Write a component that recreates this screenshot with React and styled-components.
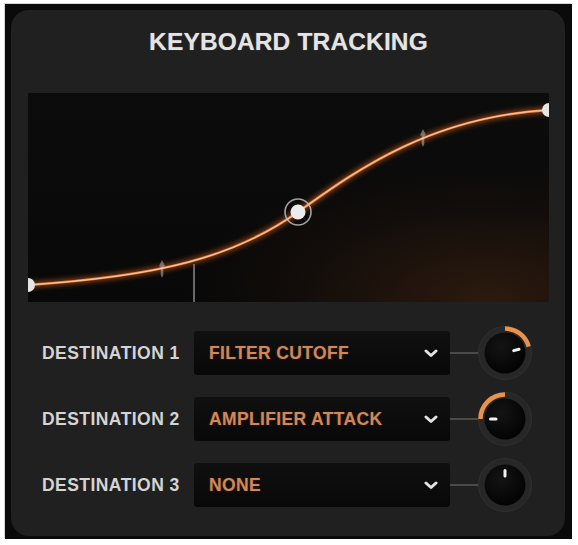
import React from 'react';
import styled, { createGlobalStyle } from 'styled-components';

const Global = createGlobalStyle`
  html, body { margin: 0; padding: 0; background: #ffffff; }
  body { font-family: "Liberation Sans", Arial, Helvetica, sans-serif; }
`;

const Frame = styled.div`
  margin: 4px 0 0 5px;
  width: 567px;
  height: 535px;
  box-sizing: border-box;
  background: #0a0a0a;
  padding: 6px 7px 3px 6px;
  box-shadow: -1px -1px 0 #d4d4d4;
`;

const Panel = styled.div`
  height: 100%;
  box-sizing: border-box;
  background: #202020;
  border-radius: 18px;
  padding: 18px 16px 0 17px;
  display: flex;
  flex-direction: column;
`;

const Title = styled.h1`
  margin: 0;
  text-align: center;
  font-size: 24.5px;
  line-height: 28px;
  font-weight: 700;
  letter-spacing: 0.15px;
  color: #e4e4e4;
  text-shadow: 0 0 1px rgba(255, 255, 255, 0.35);
`;

const Graph = styled.div`
  margin-top: 37px;
  width: 521px;
  height: 209px;
  background:
    radial-gradient(ellipse 75% 85% at 88% 98%, rgba(72, 40, 20, 0.55), rgba(40, 22, 12, 0.22) 55%, transparent 78%),
    linear-gradient(180deg, #0c0c0c 0%, #080808 100%);
  overflow: hidden;
  svg { display: block; }
`;

const Rows = styled.div`
  margin-top: 24px;
  display: flex;
  flex-direction: column;
  gap: 12px;
`;

const Row = styled.div`
  display: flex;
  align-items: center;
  height: 54px;
  padding-left: 14px;
`;

const Label = styled.div`
  width: 152px;
  font-size: 17.5px;
  font-weight: 700;
  letter-spacing: 0.45px;
  color: #d4d4d4;
  white-space: nowrap;
`;

const Select = styled.div`
  width: 256px;
  height: 44px;
  box-sizing: border-box;
  display: flex;
  align-items: center;
  justify-content: space-between;
  padding: 0 12px 0 15px;
  background: linear-gradient(180deg, #101010 0%, #080808 100%);
  border-radius: 3px;
`;

const Value = styled.span`
  font-size: 17.5px;
  font-weight: 700;
  letter-spacing: 0.35px;
  color: #d08759;
  text-shadow: 0 0 2px rgba(220, 120, 60, 0.3);
  white-space: nowrap;
`;

const Connector = styled.div`
  width: 28px;
  height: 2px;
  background: #4a4a4a;
`;

const KnobBox = styled.div`
  width: 54px;
  height: 54px;
  svg { display: block; }
`;

const pt = (cx, cy, r, a) => {
  const rad = (a * Math.PI) / 180;
  return [cx + r * Math.sin(rad), cy - r * Math.cos(rad)];
};

const Knob = ({ from, to, angle }) => {
  const c = 27;
  let arc = null;
  if (from !== to) {
    const [x0, y0] = pt(c, c, 24.5, from);
    const [x1, y1] = pt(c, c, 24.5, to);
    const large = Math.abs(to - from) > 180 ? 1 : 0;
    arc = `M${x0} ${y0} A24.5 24.5 0 ${large} 1 ${x1} ${y1}`;
  }
  const [ix0, iy0] = pt(c, c, 9, angle);
  const [ix1, iy1] = pt(c, c, 14.5, angle);
  return (
    <KnobBox>
      <svg width="54" height="54" viewBox="0 0 54 54">
        <defs>
          <radialGradient id="kb" cx="40%" cy="35%" r="70%">
            <stop offset="0%" stopColor="#141414" />
            <stop offset="100%" stopColor="#020202" />
          </radialGradient>
        </defs>
        <circle cx={c} cy={c} r="26.5" fill="#272727" stroke="#303030" strokeWidth="1" />
        {arc && <path d={arc} fill="none" stroke="#e8924f" strokeWidth="4.5" strokeLinecap="butt" />}
        <circle cx={c} cy={c} r="20.5" fill="url(#kb)" />
        <line x1={ix0} y1={iy0} x2={ix1} y2={iy1} stroke="#f2f2f2" strokeWidth="3" strokeLinecap="round" />
      </svg>
    </KnobBox>
  );
};

const Chevron = () => (
  <svg width="14" height="9" viewBox="0 0 14 9">
    <polyline points="2,2 7,6.5 12,2" fill="none" stroke="#e2e2e2" strokeWidth="3" strokeLinecap="round" strokeLinejoin="round" />
  </svg>
);

const Marker = ({ x, y }) => (
  <g transform={`translate(${x} ${y})`} opacity="0.45">
    <polygon points="0,-9 3,-3 1.3,-2 1.3,6 0,9 -1.3,6 -1.3,-2 -3,-3" fill="#d8d8d8" />
  </g>
);

const curve = 'M0 192 C130 183 205 165 270 119 C325 80 400 24 521 17';

const Curve = () => (
  <svg width="521" height="209" viewBox="0 0 521 209">
    <defs>
      <filter id="glow" x="-10%" y="-10%" width="120%" height="120%">
        <feGaussianBlur stdDeviation="2.5" />
      </filter>
    </defs>
    <line x1="166" y1="171" x2="166" y2="209" stroke="#8a8a8a" strokeWidth="1.5" />
    <path d={curve} fill="none" stroke="#c85a1c" strokeWidth="6" opacity="0.6" filter="url(#glow)" />
    <path d={curve} fill="none" stroke="#e98a4d" strokeWidth="2.4" />
    <path d={curve} fill="none" stroke="#ffd6b5" strokeWidth="1" opacity="0.85" />
    <Marker x={134} y={176} />
    <Marker x={395} y={45} />
    <circle cx="270" cy="119" r="13" fill="none" stroke="#bdbdbd" strokeWidth="1.6" opacity="0.85" />
    <circle cx="270" cy="119" r="7.5" fill="#ececec" />
    <circle cx="0" cy="192" r="7" fill="#e6e6e6" />
    <circle cx="521" cy="17" r="7" fill="#e6e6e6" />
  </svg>
);

const rows = [
  { label: 'DESTINATION 1', value: 'FILTER CUTOFF', from: 0, to: 75, angle: 75 },
  { label: 'DESTINATION 2', value: 'AMPLIFIER ATTACK', from: -90, to: 0, angle: -90 },
  { label: 'DESTINATION 3', value: 'NONE', from: 0, to: 0, angle: 0 },
];

export default function App() {
  return (
    <>
      <Global />
      <Frame>
        <Panel>
          <Title>KEYBOARD TRACKING</Title>
          <Graph>
            <Curve />
          </Graph>
          <Rows>
            {rows.map((r) => (
              <Row key={r.label}>
                <Label>{r.label}</Label>
                <Select>
                  <Value>{r.value}</Value>
                  <Chevron />
                </Select>
                <Connector />
                <Knob from={r.from} to={r.to} angle={r.angle} />
              </Row>
            ))}
          </Rows>
        </Panel>
      </Frame>
    </>
  );
}
